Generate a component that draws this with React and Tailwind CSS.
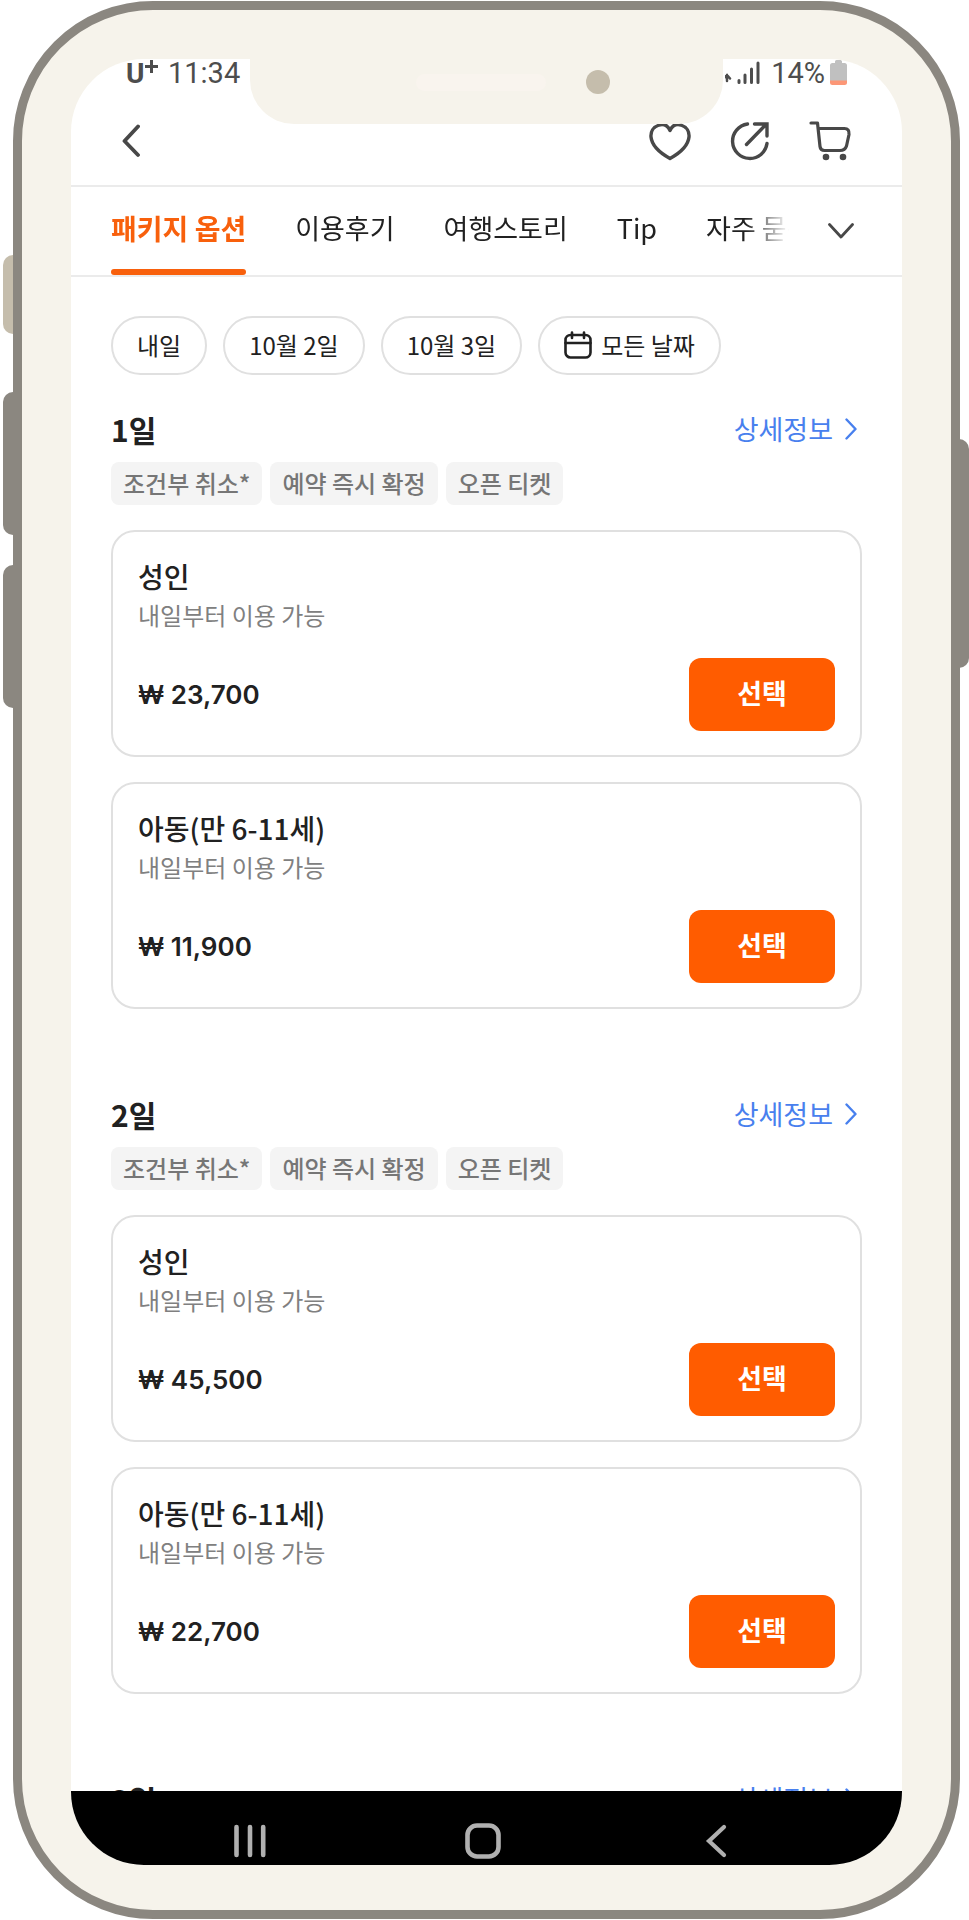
import React, { useState } from 'react';

const tabs = ['패키지 옵션', '이용후기', '여행스토리', 'Tip', '자주 묻는 질문'];
const dates = ['내일', '10월 2일', '10월 3일'];
const tags = ['조건부 취소*', '예약 즉시 확정', '오픈 티켓'];

const packages = [
  {
    title: '1일',
    options: [
      { name: '성인', price: '23,700' },
      { name: '아동(만 6-11세)', price: '11,900' },
    ],
  },
  {
    title: '2일',
    options: [
      { name: '성인', price: '45,500' },
      { name: '아동(만 6-11세)', price: '22,700' },
    ],
  },
  { title: '3일', options: [] },
];

const StatusBar = () => (
  <div className="h-[38px] pl-[55px] pr-[55px] flex justify-between items-start shrink-0 font-['Roboto',sans-serif] text-[29px] leading-[28px] text-[#4d4d4d]">
    <div className="flex">
      <span className="w-[19px] pt-px text-[28px] font-bold">U</span>
      <svg className="w-[13px] h-[13px] mt-px" viewBox="0 0 13 13" stroke="currentColor" strokeWidth="3">
        <path d="M6.5 0v13M0 6.5h13" />
      </svg>
      <span className="ml-[10px]">11:34</span>
    </div>
    <div className="flex">
      <svg className="w-[38px] h-[26px] mr-2" viewBox="0 0 38 26" fill="none" stroke="currentColor" strokeLinecap="round">
        <path d="M2 22V16M-1 19L2 16l3 3.5" strokeWidth="2.5" />
        <path d="M14 21.5v2M20 16v7.5M26.500 10v13.5M33 4v19.5" strokeWidth="3" />
      </svg>
      <span>14%</span>
      <svg className="w-[17px] h-[26px] ml-[5px]" viewBox="0 0 17 26">
        <path d="M5 4V2.500Q5 1 6.500 1h4Q12 1 12 2.500V4h2.500Q17 4 17 6.500V22H0V6.500Q0 4 2.500 4z" fill="#c0c0c0" />
        <path d="M0 21.500h17v2Q17 26 14.500 26h-12Q0 26 0 23.500z" fill="#fc9777" />
      </svg>
    </div>
  </div>
);

const Header = () => (
  <header className="h-[90px] pl-[51px] pr-[51px] flex justify-between items-center shrink-0 border-b-2 border-[#ebebeb] text-[#484848]">
    <button aria-label="뒤로">
      <svg className="w-[18px] h-[34px]" viewBox="0 0 18 34" fill="none" stroke="currentColor" strokeWidth="3.8" strokeLinecap="round" strokeLinejoin="round">
        <path d="M16 2.500L2.500 17 16 31" />
      </svg>
    </button>
    <div className="flex gap-[38px]">
      <button aria-label="찜하기">
        <svg className="w-[42px] h-[42px]" viewBox="0 0 42 42" fill="none" stroke="currentColor" strokeWidth="3.4" strokeLinejoin="round" strokeLinecap="round">
          <path d="M21 10.500C18.500 5 14 3.800 10 5C4 7 1.500 12 2 17C3 27 12 33.500 21 38.500C30 33.500 39 27 40 17C40.500 12 38 7 32 5C28 3.800 23.500 5 21 10.500z" />
        </svg>
      </button>
      <button aria-label="공유하기">
        <svg className="w-[42px] h-[42px]" viewBox="0 0 42 42" fill="none" stroke="currentColor" strokeWidth="3.4" strokeLinecap="round">
          <path d="M18.500 4A17.300 17.300 0 1 0 38 23.500" />
          <path d="M17.500 24.500L37 4.500M25.500 4h12.500v12" />
        </svg>
      </button>
      <button aria-label="장바구니">
        <svg className="w-[42px] h-[42px]" viewBox="0 0 42 42" fill="none" stroke="currentColor" strokeWidth="3.2" strokeLinecap="round" strokeLinejoin="round">
          <path d="M2 3h6.500l2.500 23.500Q11.500 30.500 15.500 30.500H31Q36 30.500 37.500 26L40 14.500Q40.500 8.500 35.500 8.500H9" />
          <circle cx="17" cy="37" r="3.3" fill="currentColor" stroke="none" />
          <circle cx="34" cy="37" r="3.3" fill="currentColor" stroke="none" />
        </svg>
      </button>
    </div>
  </header>
);

const OptionCard = ({ name, price }) => (
  <li className="px-[25px] py-6 border-2 border-[#e0e0e0] rounded-3xl">
    <h3 className="text-[28px] leading-[41px] font-medium">{name}</h3>
    <p className="text-[24px] leading-[36px] text-[#808080]">내일부터 이용 가능</p>
    <div className="mt-[25px] flex justify-between items-center">
      <span className="font-['Inter','Noto_Sans_CJK_KR',sans-serif] text-[26px] font-semibold">₩ {price}</span>
      <button className="w-[146px] h-[73px] pb-[2px] rounded-xl bg-[#ff5c00] text-white text-[27px] font-bold">선택</button>
    </div>
  </li>
);

const PackageSection = ({ title, options }) => (
  <section className="mb-[85px]">
    <div className="flex justify-between items-center h-10">
      <h2 className="text-[30px] font-bold">{title}</h2>
      <a href="#detail" className="flex items-center gap-3 pr-[5px] text-[27px] text-[#4880ee]">
        상세정보
        <svg className="w-3 h-[22px]" viewBox="0 0 12 22" fill="none" stroke="currentColor" strokeWidth="2.4" strokeLinecap="round" strokeLinejoin="round">
          <path d="M1.500 1.500L10.500 11l-9 9.500" />
        </svg>
      </a>
    </div>
    <div className="mt-[13px] flex gap-2">
      {tags.map((tag) => (
        <span key={tag} className="h-[43px] px-3 pb-[2px] flex items-center rounded-lg bg-[#f4f4f4] text-[24px] font-medium text-[#767676]">
          {tag}
        </span>
      ))}
    </div>
    <ul className="mt-[25px] flex flex-col gap-[25px]">
      {options.map((option) => (
        <OptionCard key={option.name} {...option} />
      ))}
    </ul>
  </section>
);

const SystemNav = () => (
  <div className="h-[74px] shrink-0 pl-[161px] pr-[168px] pt-[32px] flex justify-between items-start bg-black text-[#b0b0b0]">
    <button aria-label="최근 앱">
      <svg className="w-9 h-9" viewBox="0 0 36 36" stroke="currentColor" strokeWidth="4.6" strokeLinecap="round">
        <path d="M4.500 4v28M18 4v28M31.200 4v28" />
      </svg>
    </button>
    <button aria-label="홈">
      <svg className="w-9 h-9" viewBox="0 0 36 36" fill="none" stroke="currentColor" strokeWidth="4.6">
        <rect x="2.5" y="2.5" width="31" height="31" rx="9.5" />
      </svg>
    </button>
    <button aria-label="뒤로 가기">
      <svg className="w-9 h-9" viewBox="0 0 36 36" fill="none" stroke="currentColor" strokeWidth="4.2" strokeLinecap="round">
        <path d="M26 4L11 18l15 14" />
      </svg>
    </button>
  </div>
);

const App = () => {
  const [activeTab, setActiveTab] = useState(0);

  return (
    <div className="relative h-screen py-px pl-[13px] pr-[9px] bg-white overflow-hidden font-['Noto_Sans_CJK_KR',sans-serif] text-[#212121]">
      {/* 측면 버튼 */}
      <div className="absolute left-[3px] top-[255px] w-5 h-[79px] rounded-l-[10px] bg-[#c5bdac]" />
      <div className="absolute left-[3px] top-[392px] w-5 h-[143px] rounded-l-[10px] bg-[#8b8780]" />
      <div className="absolute left-[3px] top-[565px] w-5 h-[143px] rounded-l-[10px] bg-[#8b8780]" />
      <div className="absolute right-0 top-[439px] w-5 h-[229px] rounded-r-[10px] bg-[#8b8780]" />

      <div className="relative h-full pt-[49px] pb-[45px] px-[49px] border-[9px] border-[#8b8780] rounded-[140px] bg-[#f6f3eb]">
        <div className="relative h-full flex flex-col rounded-[73px] bg-white overflow-hidden">
          <div className="absolute z-10 top-0 inset-x-[179px] h-[65px] pl-[166px] pt-[11px] flex gap-[40px] rounded-b-[44px] bg-[#f6f3eb]">
            <div className="w-[130px] h-[17px] mt-1 rounded-full bg-[#f9f4ee]" />
            <div className="size-6 rounded-full bg-[#c5bdac]" />
          </div>

          <StatusBar />
          <Header />

          <div className="h-[90px] pl-10 pr-12 flex items-center shrink-0 border-b-2 border-[#ebebeb]">
            <nav className="h-full flex-1 flex gap-[49px] overflow-hidden [mask-image:linear-gradient(to_left,transparent,black_44px)]">
              {tabs.map((tab, index) => (
                <button
                  key={tab}
                  onClick={() => setActiveTab(index)}
                  className={`h-full shrink-0 pb-[6px] relative whitespace-nowrap ${
                    activeTab === index ? 'text-[28px] font-bold text-[#f8600c]' : 'text-[27px]'
                  }`}
                >
                  {tab}
                  {activeTab === index && (
                    <span className="absolute left-0 bottom-0 w-full h-[6px] rounded-full bg-[#f8600c]" />
                  )}
                </button>
              ))}
            </nav>
            <button className="ml-[39px]" aria-label="더보기">
              <svg className="w-[26px] h-4" viewBox="0 0 26 16" fill="none" stroke="#484848" strokeWidth="2.8" strokeLinecap="round" strokeLinejoin="round">
                <path d="M1.500 1.500L13 14 24.500 1.500" />
              </svg>
            </button>
          </div>

          <main className="flex-1 min-h-0 overflow-hidden px-10 pt-[39px]">
            <div className="flex gap-4 mb-[34px]">
              {dates.map((date) => (
                <button key={date} className="h-[59px] px-6 pb-[2px] border-2 border-[#e0e0e0] rounded-full text-[24px]">
                  {date}
                </button>
              ))}
              <button className="h-[59px] px-6 pb-[2px] flex items-center gap-[9px] border-2 border-[#e0e0e0] rounded-full text-[24px]">
                <svg className="w-7 h-7" viewBox="0 0 28 28" fill="none" stroke="currentColor" strokeWidth="2.6" strokeLinecap="round">
                  <rect x="1.5" y="4" width="25" height="22.5" rx="5" />
                  <path d="M1.500 12h25M8 1.500v5.500M20 1.500v5.500" />
                </svg>
                모든 날짜
              </button>
            </div>

            {packages.map((item) => (
              <PackageSection key={item.title} {...item} />
            ))}
          </main>

          <SystemNav />
        </div>
      </div>
    </div>
  );
};

export default App;
